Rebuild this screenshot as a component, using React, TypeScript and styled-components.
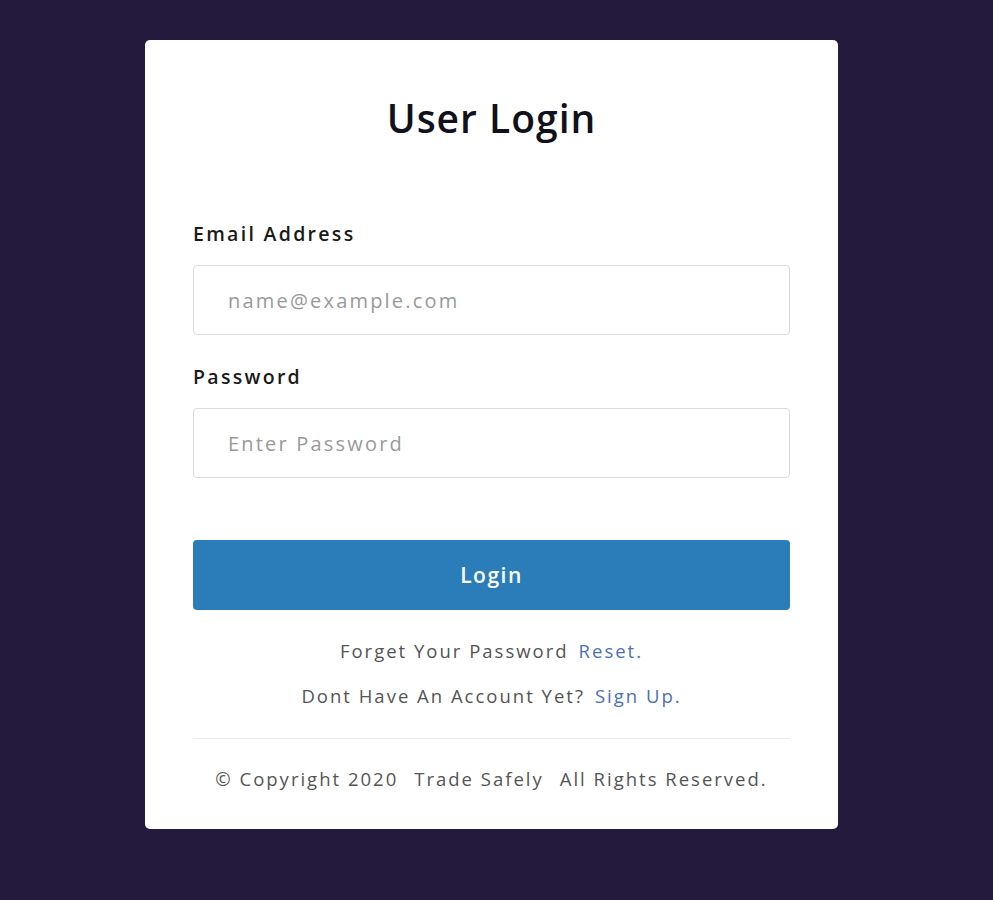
import React from "react";
import styled, { createGlobalStyle } from "styled-components";

const Global = createGlobalStyle`
  html, body { margin: 0; padding: 0; background: #231a3e; }
  body { font-family: "Open Sans", "Noto Sans", sans-serif; }
  * { box-sizing: border-box; }
`;

const Page = styled.div`
  min-height: 900px;
  padding-top: 40px;
  padding-left: 145px;
`;

const Card = styled.div`
  width: 693px;
  background: #ffffff;
  border-radius: 5px;
  padding: 0 48px;
  display: flex;
  flex-direction: column;
`;

const Title = styled.h1`
  margin: 0;
  padding-top: 55px;
  height: 180px;
  font-size: 39px;
  line-height: 46px;
  font-weight: 600;
  letter-spacing: 1px;
  color: #11111c;
  text-align: center;
`;

const Field = styled.div`
  display: flex;
  flex-direction: column;
  margin-bottom: 28px;
`;

const Label = styled.label`
  font-size: 19.5px;
  line-height: 28px;
  font-weight: 600;
  letter-spacing: 2.3px;
  color: #1a1a1a;
  margin-bottom: 17px;
`;

const Input = styled.input`
  height: 70px;
  width: 100%;
  border: 1px solid #dcdcdc;
  border-radius: 4px;
  padding: 0 34px;
  font-family: inherit;
  font-size: 20px;
  letter-spacing: 2.2px;
  color: #333;
  outline: none;
  &::placeholder { color: #9a9a9a; }
`;

const Button = styled.button`
  margin-top: 34px;
  height: 70px;
  width: 100%;
  border: none;
  border-radius: 4px;
  background: #2a7db8;
  color: #ffffff;
  font-family: inherit;
  font-size: 21px;
  font-weight: 600;
  letter-spacing: 1.5px;
`;

const Links = styled.div`
  display: flex;
  flex-direction: column;
  align-items: center;
  gap: 17px;
  margin-top: 27px;
  padding-bottom: 28px;
  border-bottom: 1px solid #ececec;
`;

const LinkLine = styled.p`
  margin: 0;
  font-size: 18.5px;
  line-height: 28px;
  letter-spacing: 2px;
  color: #555555;
`;

const Link = styled.a`
  color: #4d6fb6;
  text-decoration: none;
  margin-left: 10px;
`;

const Footer = styled.p`
  margin: 0;
  padding: 26px 0 36px;
  text-align: center;
  font-size: 18.5px;
  line-height: 28px;
  letter-spacing: 2px;
  color: #555555;
`;

const Sep = styled.span`
  margin-left: 16px;
`;

export default function App() {
  return (
    <>
      <Global />
      <Page>
        <Card>
          <Title>User Login</Title>
          <Field>
            <Label>Email Address</Label>
            <Input placeholder="name@example.com" />
          </Field>
          <Field>
            <Label>Password</Label>
            <Input type="password" placeholder="Enter Password" />
          </Field>
          <Button>Login</Button>
          <Links>
            <LinkLine>
              Forget Your Password<Link href="#">Reset.</Link>
            </LinkLine>
            <LinkLine>
              Dont Have An Account Yet?<Link href="#">Sign Up.</Link>
            </LinkLine>
          </Links>
          <Footer>
            © Copyright 2020<Sep>Trade Safely</Sep>
            <Sep>All Rights Reserved.</Sep>
          </Footer>
        </Card>
      </Page>
    </>
  );
}
